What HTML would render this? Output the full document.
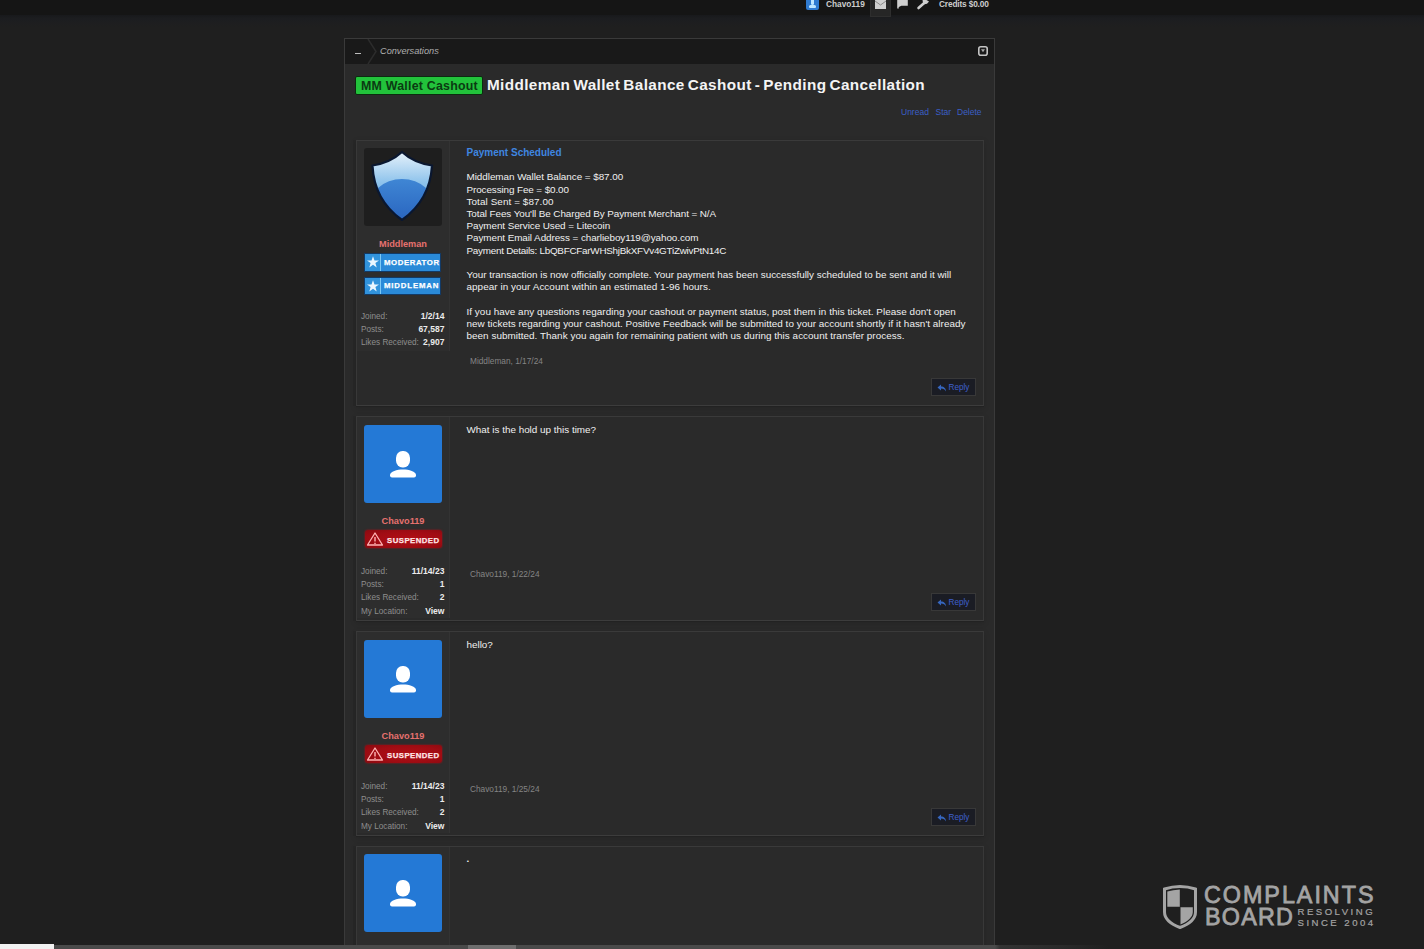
<!DOCTYPE html>
<html><head><meta charset="utf-8">
<style>
*{margin:0;padding:0;box-sizing:border-box}
html,body{width:1424px;height:949px;overflow:hidden;background:#1f1f1f;font-family:"Liberation Sans",sans-serif;color:#e6e6e6}
.a{position:absolute}
#topbar{left:0;top:0;width:1424px;height:15px;background:#151515}
#band{left:0;top:15px;width:1424px;height:12px;background:linear-gradient(#18191b,#1c1d20 30%,#1f1f1f)}
#container{left:344px;top:38px;width:651px;height:920px;background:#2a2a2a;border:1px solid #3a3a3a}
#crumb{left:345px;top:39px;width:649px;height:25px;background:#191919}
.tb{position:absolute;top:0;font-size:8.3px;font-weight:bold;color:#cdcdcd;line-height:9px}
.msg{position:absolute;left:356px;width:628px;background:#2a2a2a;border:1px solid #383838;border-top-color:#3a3a3a;border-bottom-color:#3c3c3c;box-shadow:0 1px 0 #222,0 2px 6px rgba(0,0,0,.16),-3px 0 0 #272727}
.arr{position:absolute;left:94px;top:9px}
.ucol{position:absolute;left:0;top:0;width:93px;background:#2d2d2d;border-right:1px solid #333}
.av{position:absolute;left:7px;width:78px;height:78px;border-radius:3px}
.av.blue{background:#2479d6}
.uname{position:absolute;left:-1px;width:94px;text-align:center;font-weight:bold;font-size:9.2px;line-height:10px;color:#e6716f}
.stat{position:absolute;left:4px;width:83.4px;font-size:8.2px;line-height:13px;color:#8e8e8e}
.stat b{float:right;color:#ececec;font-weight:bold;font-size:8.5px}
.body{position:absolute;left:109.5px;font-size:9.9px;line-height:12.2px;color:#f0f0f0;white-space:nowrap}
.date{position:absolute;left:113px;font-size:8.3px;line-height:10px;color:#858585}
.reply{position:absolute;left:574px;width:45px;height:17.5px;background:#1a1c24;border:1px solid #383838;color:#3f60cc;font-size:8.2px;line-height:17px;padding-left:16.5px}
.reply svg{position:absolute;left:4.5px;top:4.5px;opacity:.9}
.badge{position:absolute;left:7px;width:77px;height:18px;background:#2a8ad8;border:1px solid #123a66}
.badge .st{position:absolute;left:0;top:0;width:16px;height:16.5px;background:#3193dc;border-right:1px solid #7cc8f5}
.badge .tx{position:absolute;left:19px;top:0.7px;font-size:7.8px;line-height:16px;font-weight:bold;color:#fff;letter-spacing:0.58px;-webkit-text-stroke:0.25px #fff}
.susp{position:absolute;left:7.5px;width:77px;height:18px;background:radial-gradient(ellipse at 55% 50%,#b30d15 0,#a00c13 60%,#8a0a10 100%);border-radius:3px;box-shadow:0 0 2px #b01018}
.susp .tx{position:absolute;left:22.5px;top:1.5px;font-size:7.8px;line-height:18px;font-weight:bold;color:#ffe6e6;letter-spacing:0.45px;-webkit-text-stroke:0.25px #ffe6e6}
.susp svg{position:absolute;left:1px;top:2px}
</style></head><body>
<div id="topbar" class="a"></div>
<div id="band" class="a"></div>
<!-- top bar items -->
<div class="a" style="left:806px;top:0;width:13px;height:10px;background:#2f7ad0;border-radius:0 0 2px 2px"></div>
<div class="a" style="left:810.5px;top:0;width:3.5px;height:4.5px;background:#bfe6ff;border-radius:0 0 1.5px 1.5px"></div>
<div class="a" style="left:809px;top:5px;width:7px;height:2.5px;background:#bfe6ff;border-radius:1.5px 1.5px 1px 1px"></div>
<div class="tb" style="left:826px">Chavo119</div>
<div class="a" style="left:870px;top:0;width:21px;height:17px;background:#262626;border:1px solid #2e2e2e;border-top:0"></div>
<div class="a" style="left:875px;top:0;width:11px;height:9px;background:#cfcfcf"></div>
<svg class="a" style="left:875px;top:0" width="11" height="9"><path d="M0,1 L5.5,5 L11,1" stroke="#8a8a8a" stroke-width="1" fill="none"/></svg>
<svg class="a" style="left:897px;top:0" width="11" height="9"><path d="M1,0 V8.5 M1,0 H10 V5 H4 L2,6 Z" fill="#cfcfcf" stroke="#cfcfcf" stroke-width="1.6"/></svg>
<svg class="a" style="left:916px;top:0" width="14" height="11"><path d="M2.5,8 L8.5,2.8" stroke="#cfcfcf" stroke-width="2.6" stroke-linecap="round"/><path d="M6.5,0 L10.5,0 L13,1.5 L11,3.8 L8.5,4.2 L7,3 Z" fill="#cfcfcf"/></svg>
<div class="tb" style="left:939px;letter-spacing:-0.15px">Credits $0.00</div>

<div id="container" class="a"></div>
<div id="crumb" class="a"></div>
<div class="a" style="left:355px;top:53px;width:6px;height:1px;background:#bdbdbd"></div>
<svg class="a" style="left:365px;top:39px" width="14" height="25"><path d="M3,0 L11,12.5 L3,25" stroke="#2c2c2c" stroke-width="1.5" fill="none"/></svg>
<div class="a" style="left:380px;top:45.7px;font-size:9.2px;font-style:italic;color:#b0b0b0">Conversations</div>
<svg class="a" style="left:978px;top:46px" width="10" height="10"><rect x="0.8" y="0.8" width="8.4" height="8.4" rx="2" fill="#1a1a1a" stroke="#c4c4c4" stroke-width="1.6"/><path d="M3,3.3 H7 L5,6.3 Z" fill="#aaa"/></svg>

<!-- title -->
<div class="a" style="left:355px;top:76px;width:128px;height:19px;background:#22c23b;border:1px solid #0c2a10;border-radius:2px"></div>
<div class="a" style="left:361px;top:77.5px;font-size:12.4px;line-height:17px;font-weight:bold;color:#0b3a12;letter-spacing:0.22px">MM Wallet Cashout</div>
<div class="a" style="left:487px;top:74.8px;font-size:15.3px;line-height:19px;font-weight:bold;color:#f4f4f4;letter-spacing:0.38px;word-spacing:-1.5px">Middleman Wallet Balance Cashout - Pending Cancellation</div>
<div class="a" style="left:901px;top:107px;font-size:8.5px;color:#3a5fc6">Unread</div><div class="a" style="left:935.5px;top:107px;font-size:8.5px;color:#3a5fc6">Star</div><div class="a" style="left:957px;top:107px;font-size:8.5px;color:#3a5fc6">Delete</div>

<!-- message 1 -->
<div class="msg" style="top:140px;height:266px">
  <div class="ucol" style="height:210px">
    <div class="av" style="top:7px;background:#1e1e1e">
      <svg width="78" height="78" viewBox="0 0 78 78">
        <defs>
          <linearGradient id="sg" x1="0" y1="0" x2="0" y2="1"><stop offset="0" stop-color="#e6f1fa"/><stop offset="0.45" stop-color="#8ec3ec"/><stop offset="1" stop-color="#5aa0e0"/></linearGradient>
          <linearGradient id="sd" x1="0" y1="0" x2="0" y2="1"><stop offset="0" stop-color="#3f86d4"/><stop offset="1" stop-color="#1f55b6"/></linearGradient>
          <clipPath id="sc"><path d="M38,4 Q50,15 68,17.5 Q66,52 38,72 Q10,52 8.5,17.5 Q26,15 38,4 Z"/></clipPath>
        </defs>
        <path d="M38,4 Q50,15 68,17.5 Q66,52 38,72 Q10,52 8.5,17.5 Q26,15 38,4 Z" fill="url(#sg)"/>
        <g clip-path="url(#sc)"><ellipse cx="38" cy="62" rx="34" ry="31" fill="url(#sd)"/></g>
        <path d="M38,4 Q50,15 68,17.5 Q66,52 38,72 Q10,52 8.5,17.5 Q26,15 38,4 Z" fill="none" stroke="#0a1730" stroke-width="2.2" stroke-linejoin="round"/>
      </svg>
    </div>
    <div class="uname" style="top:98px">Middleman</div>
    <div class="badge" style="top:112px;height:18.5px"><div class="st"><svg width="16" height="16" viewBox="0 0 16 16"><path d="M8,2.2 L9.5,6.4 L14,6.4 L10.4,9.1 L11.7,13.5 L8,10.8 L4.3,13.5 L5.6,9.1 L2,6.4 L6.5,6.4 Z" fill="#eaf6ff"/></svg></div><div class="tx">MODERATOR</div></div>
    <div class="badge" style="top:135.5px;height:18.5px"><div class="st"><svg width="16" height="16" viewBox="0 0 16 16"><path d="M8,2.2 L9.5,6.4 L14,6.4 L10.4,9.1 L11.7,13.5 L8,10.8 L4.3,13.5 L5.6,9.1 L2,6.4 L6.5,6.4 Z" fill="#eaf6ff"/></svg></div><div class="tx" style="letter-spacing:0.85px">MIDDLEMAN</div></div>
    <div class="stat" style="top:168.5px;line-height:13px">Joined:<b>1/2/14</b><br>Posts:<b>67,587</b><br>Likes Received:<b>2,907</b></div>
  </div>
  <div class="body" style="top:6px">
<span style="font-weight:bold;color:#3f86e0;font-size:10px">Payment Scheduled</span><br><br><span style="letter-spacing:-0.04px">Middleman Wallet Balance = $87.00</span><br><span style="letter-spacing:-0.1px">Processing Fee = $0.00</span><br><span style="letter-spacing:0.09px">Total Sent = $87.00</span><br><span style="letter-spacing:-0.085px">Total Fees You'll Be Charged By Payment Merchant = N/A</span><br><span style="letter-spacing:-0.07px">Payment Service Used = Litecoin</span><br><span style="letter-spacing:-0.07px">Payment Email Address = charlieboy119@yahoo.com</span><br><span style="letter-spacing:-0.26px">Payment Details: LbQBFCFarWHShjBkXFVv4GTiZwivPtN14C</span><br><br><span style="letter-spacing:0px">Your transaction is now officially complete. Your payment has been successfully scheduled to be sent and it will</span><br><span style="letter-spacing:0.06px">appear in your Account within an estimated 1-96 hours.</span><br><br><span style="letter-spacing:0.045px">If you have any questions regarding your cashout or payment status, post them in this ticket. Please don't open</span><br><span style="letter-spacing:0.026px">new tickets regarding your cashout. Positive Feedback will be submitted to your account shortly if it hasn't already</span><br><span style="letter-spacing:0.04px">been submitted. Thank you again for remaining patient with us during this account transfer process.</span>
  </div>
  <div class="date" style="top:215px">Middleman, 1/17/24</div>
  <div class="reply" style="top:237px"><svg width="10" height="8" viewBox="0 0 10 8"><path d="M4,0.5 L0.5,3.5 L4,6.5 V4.5 C6.5,4.5 8,5.5 9,7.5 C9,4.5 7,2.5 4,2.5 Z" fill="#3a6fd0"/></svg>Reply</div>
</div>

<div class="msg" style="top:416px;height:205px">
  <div class="ucol" style="height:201px">
    <div class="av blue" style="top:7.5px"><svg width="78" height="78" viewBox="0 0 78 78"><rect x="32" y="26" width="14" height="16.5" rx="6.5" ry="7" fill="#fff"/><path d="M26,50 C26,46.5 33,44.5 39,44.5 C45,44.5 52,46.5 52,50 V50.5 Q52,52.5 50,52.5 H28 Q26,52.5 26,50.5 Z" fill="#fff"/></svg></div>
    <div class="uname" style="top:99px">Chavo119</div>
    <div class="susp" style="top:113px"><svg width="18" height="14" viewBox="0 0 18 14"><path d="M9,1 L16.5,13 H1.5 Z" fill="none" stroke="#ffb4b4" stroke-width="1.3" stroke-linejoin="round"/><path d="M9,5 V9.5 M9,10.8 V12" stroke="#ffb4b4" stroke-width="1.4"/></svg><div class="tx">SUSPENDED</div></div>
    <div class="stat" style="top:148px;line-height:13.2px">Joined:<b>11/14/23</b><br>Posts:<b>1</b><br>Likes Received:<b>2</b><br>My Location:<b>View</b></div>
  </div>
  <div class="body" style="top:7px">What is the hold up this time?</div>
  <div class="date" style="top:152px">Chavo119, 1/22/24</div>
  <div class="reply" style="top:176px"><svg width="10" height="8" viewBox="0 0 10 8"><path d="M4,0.5 L0.5,3.5 L4,6.5 V4.5 C6.5,4.5 8,5.5 9,7.5 C9,4.5 7,2.5 4,2.5 Z" fill="#3a6fd0"/></svg>Reply</div>
</div>
<div class="msg" style="top:631px;height:205px">
  <div class="ucol" style="height:201px">
    <div class="av blue" style="top:7.5px"><svg width="78" height="78" viewBox="0 0 78 78"><rect x="32" y="26" width="14" height="16.5" rx="6.5" ry="7" fill="#fff"/><path d="M26,50 C26,46.5 33,44.5 39,44.5 C45,44.5 52,46.5 52,50 V50.5 Q52,52.5 50,52.5 H28 Q26,52.5 26,50.5 Z" fill="#fff"/></svg></div>
    <div class="uname" style="top:99px">Chavo119</div>
    <div class="susp" style="top:113px"><svg width="18" height="14" viewBox="0 0 18 14"><path d="M9,1 L16.5,13 H1.5 Z" fill="none" stroke="#ffb4b4" stroke-width="1.3" stroke-linejoin="round"/><path d="M9,5 V9.5 M9,10.8 V12" stroke="#ffb4b4" stroke-width="1.4"/></svg><div class="tx">SUSPENDED</div></div>
    <div class="stat" style="top:148px;line-height:13.2px">Joined:<b>11/14/23</b><br>Posts:<b>1</b><br>Likes Received:<b>2</b><br>My Location:<b>View</b></div>
  </div>
  <div class="body" style="top:7px">hello?</div>
  <div class="date" style="top:152px">Chavo119, 1/25/24</div>
  <div class="reply" style="top:176px"><svg width="10" height="8" viewBox="0 0 10 8"><path d="M4,0.5 L0.5,3.5 L4,6.5 V4.5 C6.5,4.5 8,5.5 9,7.5 C9,4.5 7,2.5 4,2.5 Z" fill="#3a6fd0"/></svg>Reply</div>
</div>
<div class="msg" style="top:846px;height:205px">
  <div class="ucol" style="height:201px">
    <div class="av blue" style="top:6.5px"><svg width="78" height="78" viewBox="0 0 78 78"><rect x="32" y="26" width="14" height="16.5" rx="6.5" ry="7" fill="#fff"/><path d="M26,50 C26,46.5 33,44.5 39,44.5 C45,44.5 52,46.5 52,50 V50.5 Q52,52.5 50,52.5 H28 Q26,52.5 26,50.5 Z" fill="#fff"/></svg></div>
    <div class="uname" style="top:99px">Chavo119</div>
    <div class="susp" style="top:113px"><svg width="18" height="14" viewBox="0 0 18 14"><path d="M9,1 L16.5,13 H1.5 Z" fill="none" stroke="#ffb4b4" stroke-width="1.3" stroke-linejoin="round"/><path d="M9,5 V9.5 M9,10.8 V12" stroke="#ffb4b4" stroke-width="1.4"/></svg><div class="tx">SUSPENDED</div></div>
    <div class="stat" style="top:148px;line-height:13.2px">Joined:<b>11/14/23</b><br>Posts:<b>1</b><br>Likes Received:<b>2</b><br>My Location:<b>View</b></div>
  </div>
  <div class="body" style="top:5.5px"><b>.</b></div>
  <div class="date" style="top:152px">Chavo119, 1/26/24</div>
  <div class="reply" style="top:176px"><svg width="10" height="8" viewBox="0 0 10 8"><path d="M4,0.5 L0.5,3.5 L4,6.5 V4.5 C6.5,4.5 8,5.5 9,7.5 C9,4.5 7,2.5 4,2.5 Z" fill="#3a6fd0"/></svg>Reply</div>
</div>

<!-- logo -->
<svg class="a" style="left:1162px;top:884px" width="36" height="46" viewBox="0 0 36 46"><path d="M2.5,5 Q18,0 33.5,5 V28 C33.5,36 26,40.5 18,43.5 C10,40.5 2.5,36 2.5,28 Z" fill="none" stroke="#a4a4a4" stroke-width="3"/><path d="M5.3,7.6 Q11,5.9 17.8,5.5 V22.8 H5.3 Z" fill="#a4a4a4"/><path d="M18.5,23.2 H30.8 V28 C30.8,33 26,37.5 18.5,40.5 Z" fill="#a4a4a4"/></svg>
<div class="a" style="left:1204px;top:881.8px;font-size:23.3px;line-height:27px;color:#a4a4a4;letter-spacing:2px;-webkit-text-stroke:0.8px #a4a4a4">COMPLAINTS</div>
<div class="a" style="left:1205px;top:904.4px;font-size:23.3px;line-height:27px;color:#a4a4a4;letter-spacing:1.25px;-webkit-text-stroke:0.8px #a4a4a4">BOARD</div>
<div class="a" style="left:1297.5px;top:907px;font-size:9.6px;line-height:10.6px;color:#a4a4a4;letter-spacing:2.48px;-webkit-text-stroke:0.2px #a4a4a4">RESOLVING<br>SINCE 2004</div>

<!-- scrollbar -->
<div class="a" style="left:0;top:945px;width:1110px;height:4px;background:linear-gradient(90deg,#4a4a4a 0,#4a4a4a 995px,#333 1000px,#2a2a2a 1060px,#1f1f1f 1110px)"></div>
<div class="a" style="left:468px;top:945px;width:48px;height:4px;background:#6e6e6e"></div>
<div class="a" style="left:0;top:944px;width:54px;height:5px;background:#f2f2f2"></div>
</body></html>
